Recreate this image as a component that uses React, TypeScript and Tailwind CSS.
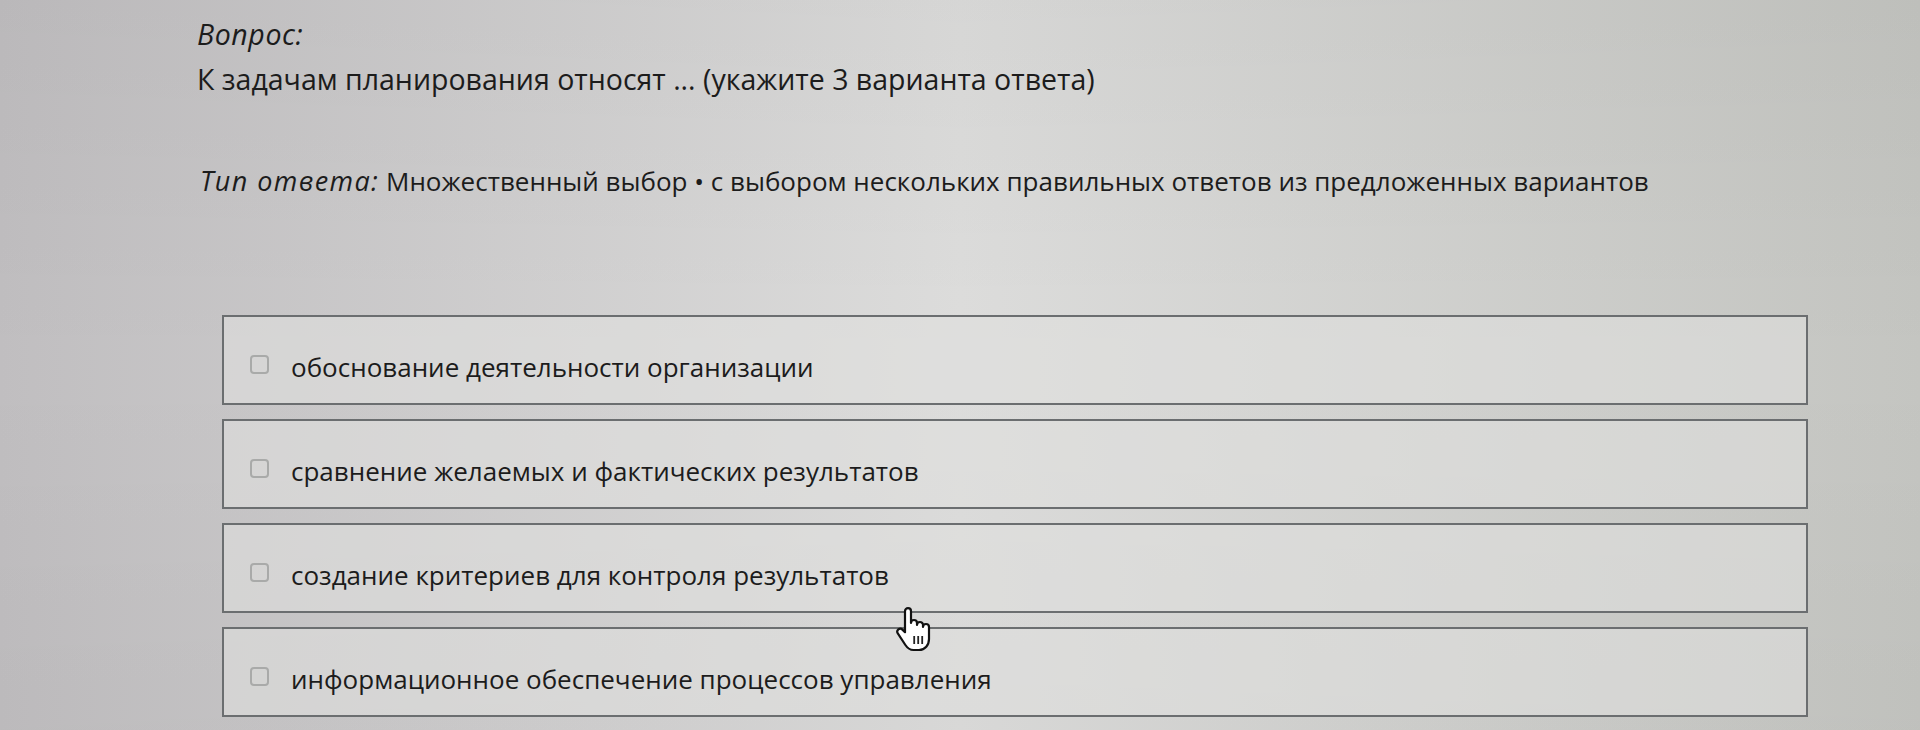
import React from "react";

const options = [
  "обоснование деятельности организации",
  "сравнение желаемых и фактических результатов",
  "создание критериев для контроля результатов",
  "информационное обеспечение процессов управления",
];

function HandCursor() {
  return (
    <svg
      className="absolute left-[895px] top-[607px]"
      width="36"
      height="46"
      viewBox="0 0 18 23"
    >
      <path
        d="M6.5 0.6a1.5 1.5 0 0 1 1.5 1.5V8a1.5 1.5 0 0 1 3 0V9a1.5 1.5 0 0 1 3 0V10a1.5 1.5 0 0 1 3 0V16c0 3-2 5.5-5 5.5H9.2c-2 0-3-1-4-2.5L1.4 13.2a1.5 1.5 0 0 1 2.3-1.9L5 12.6V2.1a1.5 1.5 0 0 1 1.5-1.5Z"
        fill="#ffffff"
        stroke="#111111"
        strokeWidth="1.1"
        strokeLinejoin="round"
      />
      <path d="M9.6 14.5V18.5M11.6 14.5V18.5M13.6 14.5V18.5" stroke="#222" strokeWidth="0.9" />
    </svg>
  );
}

export default function App() {
  return (
    <div
      className="relative h-[730px] w-full overflow-hidden bg-linear-to-r from-[#c0bec0] via-[#dddddc] to-[#c4c5c1] text-[#1c1c1c]"
      style={{ fontFamily: '"Open Sans", "Noto Sans", sans-serif' }}
    >
      <div className="absolute inset-0 bg-linear-to-b from-[#00000008] via-transparent to-[#00000006]" />
      <div className="relative pl-[197px] pt-[11px]">
        <div className="text-[28.5px] italic leading-[47px] tracking-[0.6px]">Вопрос:</div>
        <div className="-mt-[2px] text-[28.5px] leading-[47px]">
          К задачам планирования относят ... (укажите 3 варианта ответа)
        </div>
        <div className="mt-[55px] h-[47px] pl-[3px] text-[26px] leading-[47px]">
          <span className="text-[27px] italic leading-[20px] tracking-[1.4px]">Тип ответа:</span> Множественный
          выбор • с выбором нескольких правильных ответов из предложенных вариантов
        </div>
      </div>
      <div className="relative ml-[222px] mt-[110px] flex w-[1586px] flex-col gap-[14px]">
        {options.map((o) => (
          <div
            key={o}
            className="flex h-[90px] items-center border-2 border-[#6b6e70] bg-[#dfe0de]/60 pl-[26px]"
          >
            <span className="mt-[9px] h-[19px] w-[19px] shrink-0 rounded-[4px] border-2 border-[#a9aaa9]" />
            <span className="ml-[22px] pt-[14px] text-[26px]">{o}</span>
          </div>
        ))}
      </div>
      <HandCursor />
    </div>
  );
}
